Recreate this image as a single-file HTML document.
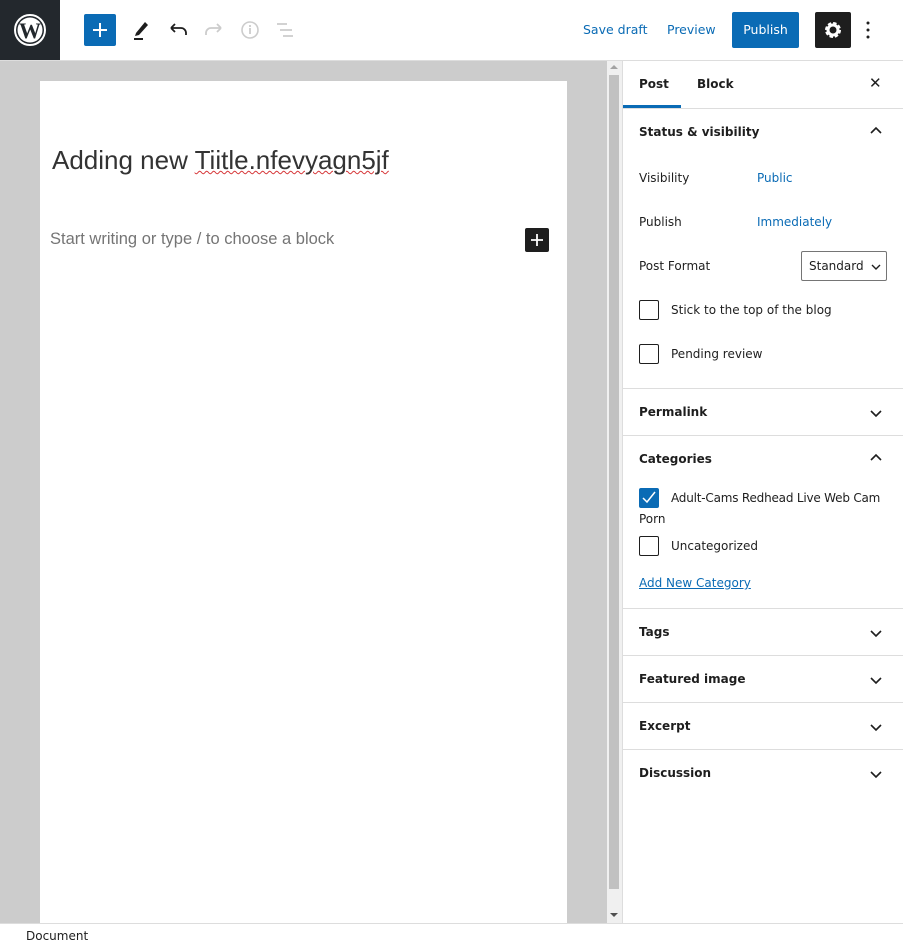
<!DOCTYPE html>
<html><head><style>
*{box-sizing:border-box;margin:0;padding:0}
body{width:903px;height:948px;overflow:hidden;font-family:"DejaVu Sans","Liberation Sans",sans-serif;font-size:12.5px;color:#1e1e1e;background:#fff;position:relative}
.abs{position:absolute}
.top{left:0;top:0;width:903px;height:61px;border-bottom:1px solid #ddd;background:#fff}
.wp{left:0;top:0;width:60px;height:60px;background:#23282d}
.lnk{color:#0a6bb5;font-size:12.5px}
.canvas{left:0;top:61px;width:607px;height:862px;background:#ccc}
.paper{left:40px;top:81px;width:527px;height:842px;background:#fff}
.sb{left:607px;top:61px;width:15px;height:862px;background:#f0f0f0}
.side{left:622px;top:61px;width:281px;height:862px;border-left:1px solid #ddd;background:#fff}
.sec{position:absolute;left:0;width:281px;border-bottom:1px solid #ddd}
.h{position:absolute;left:16px;font-weight:bold;font-size:12px}
.chev{position:absolute;right:22px}
.cb{position:absolute;width:20px;height:20px;border:1.5px solid #1e1e1e;border-radius:2px}
.t{position:absolute;font-size:12px;white-space:nowrap}
</style></head><body>
<div class="abs top"></div>
<div class="abs wp"><svg class="abs" style="left:14px;top:14px" width="32" height="32" viewBox="0 0 32 32"><circle cx="16" cy="16" r="15" fill="none" stroke="#fff" stroke-width="2"/><circle cx="16" cy="16" r="12.5" fill="#fff"/><text x="16" y="24" text-anchor="middle" font-family="Liberation Serif" font-weight="bold" font-size="22" fill="#23282d">W</text></svg></div>
<div class="abs" style="left:84px;top:14px;width:32px;height:32px;background:#0a6bb5;border-radius:2px"><svg width="32" height="32"><path d="M16 9v14M9 16h14" stroke="#fff" stroke-width="2"/></svg></div>
<svg class="abs" style="left:130px;top:18px" width="24" height="24"><path d="M6 15 L15 4 L18 7 L9 17 L5 18Z" fill="#1e1e1e"/><rect x="4" y="20" width="9" height="2" fill="#1e1e1e"/></svg>
<svg class="abs" style="left:166px;top:18px" width="24" height="24"><path d="M5 10h10a5 5 0 0 1 5 5v2M5 10l4-4M5 10l4 4" fill="none" stroke="#1e1e1e" stroke-width="1.8"/></svg>
<svg class="abs" style="left:202px;top:18px" width="24" height="24"><path d="M19 10H9a5 5 0 0 0-5 5v2M19 10l-4-4M19 10l-4 4" fill="none" stroke="#ccc" stroke-width="1.8"/></svg>
<svg class="abs" style="left:238px;top:18px" width="24" height="24"><circle cx="12" cy="12" r="8" fill="none" stroke="#ccc" stroke-width="1.6"/><path d="M12 10v6M12 7v2" stroke="#ccc" stroke-width="1.8"/></svg>
<svg class="abs" style="left:274px;top:18px" width="24" height="24"><path d="M3 6h10M6 12h12M9 18h10" stroke="#ccc" stroke-width="1.8"/></svg>
<div class="abs lnk" style="left:583px;top:22px">Save draft</div>
<div class="abs lnk" style="left:667px;top:22px">Preview</div>
<div class="abs" style="left:732px;top:12px;width:67px;height:36px;background:#0a6bb5;border-radius:2px;color:#fff;text-align:center;line-height:36px">Publish</div>
<div class="abs" style="left:815px;top:12px;width:36px;height:36px;background:#1e1e1e;border-radius:2px"><svg width="36" height="36"><circle cx="18" cy="18" r="6" fill="none" stroke="#fff" stroke-width="4" stroke-dasharray="3 1.7"/><circle cx="18" cy="18" r="5" fill="none" stroke="#fff" stroke-width="3"/></svg></div>
<svg class="abs" style="left:862px;top:18px" width="12" height="24"><circle cx="6" cy="5" r="1.5" fill="#1e1e1e"/><circle cx="6" cy="12" r="1.5" fill="#1e1e1e"/><circle cx="6" cy="19" r="1.5" fill="#1e1e1e"/></svg>

<div class="abs canvas"></div>
<div class="abs paper"></div>
<div class="abs" style="left:52px;top:145px;font-size:26px;font-family:'Liberation Sans',sans-serif;color:#333">Adding new <span style="text-decoration:underline wavy #d63638;text-decoration-thickness:1px">Tiitle.nfevyagn5jf</span></div>
<div class="abs" style="left:50px;top:230px;font-size:16.5px;font-family:'Liberation Sans',sans-serif;color:#757575">Start writing or type / to choose a block</div>
<div class="abs" style="left:525px;top:228px;width:24px;height:24px;background:#1e1e1e;border-radius:2px"><svg width="24" height="24"><path d="M12 6v12M6 12h12" stroke="#fff" stroke-width="1.8"/></svg></div>
<div class="abs sb"><div class="abs" style="left:2px;top:14px;width:10px;height:814px;background:#c1c1c1"></div>
<svg class="abs" style="left:3px;top:3px" width="9" height="6"><path d="M0 5h8L4 1z" fill="#a3a3a3"/></svg>
<svg class="abs" style="left:3px;top:851px" width="9" height="6"><path d="M0 1h8L4 5z" fill="#505050"/></svg></div>

<div class="abs side">
<div class="sec" style="top:0;height:48px"><div class="t" style="left:16px;top:16px;font-weight:bold">Post</div><div class="t" style="left:74px;top:16px;font-weight:bold">Block</div><div class="abs" style="left:0;top:44px;width:58px;height:3px;background:#0a6bb5"></div><div class="t" style="left:246px;top:13px;font-size:15px">✕</div></div>
<div class="sec" style="top:48px;height:280px">
<div class="h" style="top:16px">Status &amp; visibility</div>
<svg class="chev" style="top:16px" width="12" height="12"><path d="M1 8l5-5 5 5" fill="none" stroke="#1e1e1e" stroke-width="1.6"/></svg>
<div class="t" style="left:16px;top:62px">Visibility</div><div class="t lnk" style="left:134px;top:62px">Public</div>
<div class="t" style="left:16px;top:106px">Publish</div><div class="t lnk" style="left:134px;top:106px">Immediately</div>
<div class="t" style="left:16px;top:150px">Post Format</div>
<div class="abs" style="left:178px;top:142px;width:86px;height:30px;border:1px solid #757575;border-radius:2px"><span class="t" style="left:7px;top:7px">Standard</span><svg class="abs" style="left:69px;top:10px" width="10" height="10"><path d="M1 3l4 4 4-4" fill="none" stroke="#1e1e1e" stroke-width="1.4"/></svg></div>
<div class="cb" style="left:16px;top:191px"></div><div class="t" style="left:48px;top:194px">Stick to the top of the blog</div>
<div class="cb" style="left:16px;top:235px"></div><div class="t" style="left:48px;top:238px">Pending review</div>
</div>
<div class="sec" style="top:328px;height:47px"><div class="h" style="top:16px">Permalink</div><svg class="chev" style="top:18px" width="12" height="12"><path d="M1 4l5 5 5-5" fill="none" stroke="#1e1e1e" stroke-width="1.6"/></svg></div>
<div class="sec" style="top:375px;height:173px">
<div class="h" style="top:16px">Categories</div><svg class="chev" style="top:16px" width="12" height="12"><path d="M1 8l5-5 5 5" fill="none" stroke="#1e1e1e" stroke-width="1.6"/></svg>
<div class="cb" style="left:16px;top:52px;background:#0a6bb5;border-color:#0a6bb5"><svg class="abs" style="left:0;top:0" width="18" height="18"><path d="M3 9l4 4 8-10" fill="none" stroke="#fff" stroke-width="1.5"/></svg></div>
<div class="t" style="left:48px;top:55px;letter-spacing:-0.2px">Adult-Cams Redhead Live Web Cam</div>
<div class="t" style="left:16px;top:76px">Porn</div>
<div class="cb" style="left:16px;top:100px"></div><div class="t" style="left:48px;top:103px">Uncategorized</div>
<div class="t lnk" style="left:16px;top:140px;text-decoration:underline">Add New Category</div>
</div>
<div class="sec" style="top:548px;height:47px"><div class="h" style="top:16px">Tags</div><svg class="chev" style="top:18px" width="12" height="12"><path d="M1 4l5 5 5-5" fill="none" stroke="#1e1e1e" stroke-width="1.6"/></svg></div>
<div class="sec" style="top:595px;height:47px"><div class="h" style="top:16px">Featured image</div><svg class="chev" style="top:18px" width="12" height="12"><path d="M1 4l5 5 5-5" fill="none" stroke="#1e1e1e" stroke-width="1.6"/></svg></div>
<div class="sec" style="top:642px;height:47px"><div class="h" style="top:16px">Excerpt</div><svg class="chev" style="top:18px" width="12" height="12"><path d="M1 4l5 5 5-5" fill="none" stroke="#1e1e1e" stroke-width="1.6"/></svg></div>
<div class="sec" style="top:689px;height:47px;border-bottom:none"><div class="h" style="top:16px">Discussion</div><svg class="chev" style="top:18px" width="12" height="12"><path d="M1 4l5 5 5-5" fill="none" stroke="#1e1e1e" stroke-width="1.6"/></svg></div>
</div>
<div class="abs" style="left:0;top:923px;width:903px;height:25px;border-top:1px solid #ddd;background:#fff"><span class="t" style="left:26px;top:5px">Document</span></div>
</body></html>
